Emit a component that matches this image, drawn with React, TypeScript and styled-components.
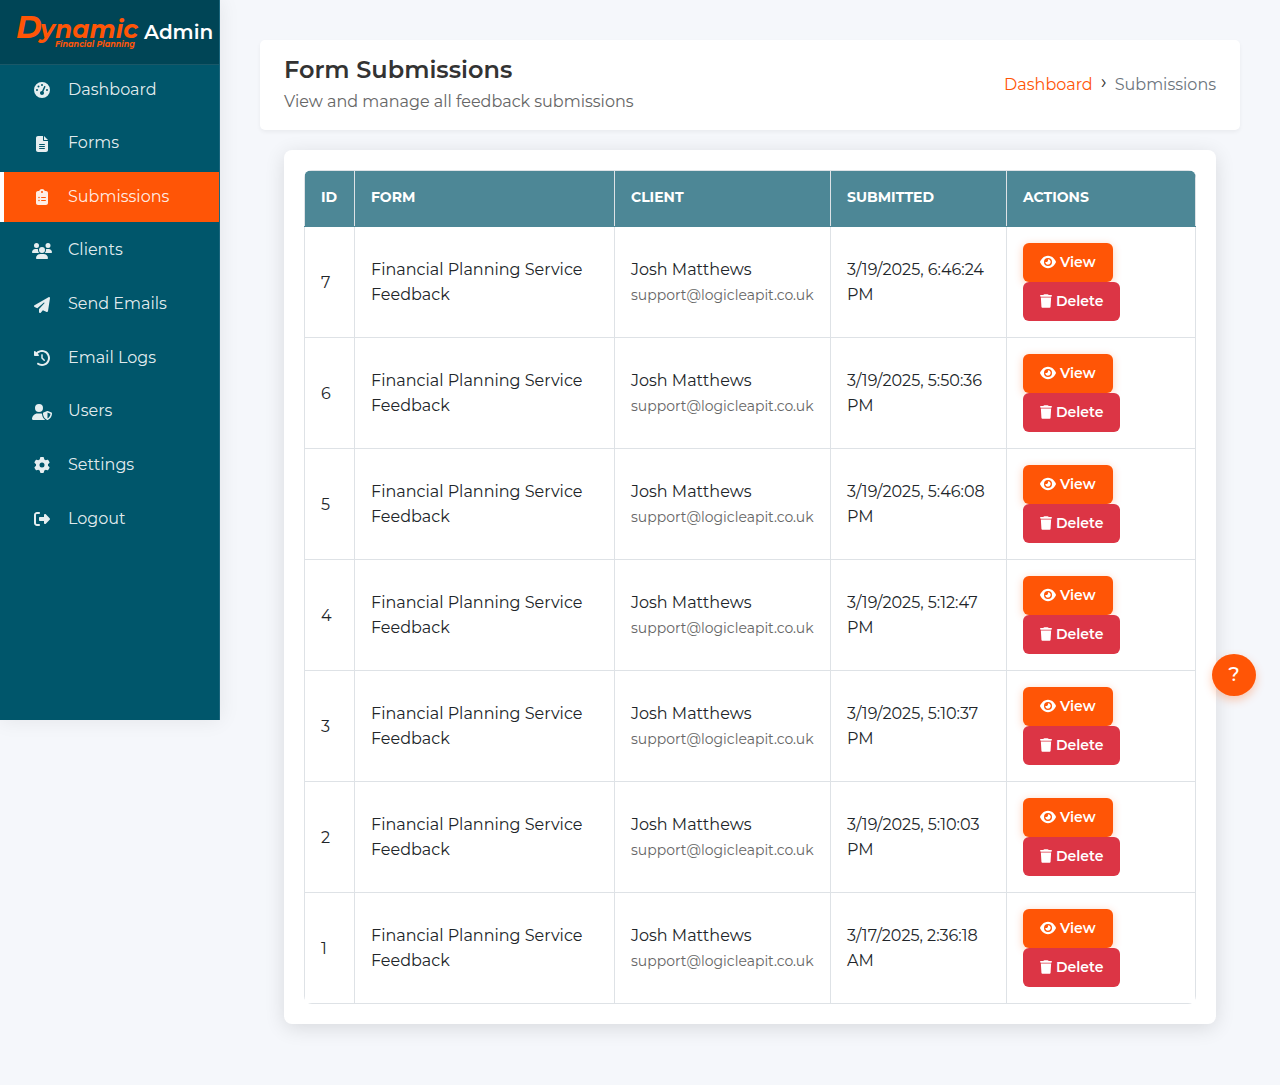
import React from 'react';
import styled, { createGlobalStyle } from 'styled-components';
import {
  FaGaugeHigh,
  FaFileLines,
  FaClipboardList,
  FaUsers,
  FaPaperPlane,
  FaClockRotateLeft,
  FaUserShield,
  FaGear,
  FaRightFromBracket,
  FaEye,
  FaTrash,
} from 'react-icons/fa6';

const GlobalStyle = createGlobalStyle`
  *, *::before, *::after { box-sizing: border-box; }
  body {
    margin: 0;
    background: #f5f7fb;
    color: #212529;
    font-family: Montserrat, Inter, "Open Sans", sans-serif;
    font-size: 16px;
    line-height: 25px;
  }
`;

const Layout = styled.div`
  display: flex;
  align-items: flex-start;
  position: relative;
`;

const Sidebar = styled.aside`
  flex: 0 0 220px;
  height: 720px;
  background: #00566b;
  border-right: 1px solid #1a667d;
  box-shadow: 0 0 20px rgba(0, 0, 0, 0.08);
`;

const Brand = styled.div`
  display: flex;
  align-items: center;
  gap: 8px;
  height: 65px;
  padding-left: 16px;
  background: #004556;
  border-bottom: 1px solid #1a5868;
  color: #fff;
  font-size: 20px;
  font-weight: 600;
`;

const Logo = styled.svg`
  flex: none;
  display: block;
  overflow: visible;
  fill: #ff5506;
  font-style: italic;
  font-weight: 700;
`;

const Nav = styled.nav`
  display: flex;
  flex-direction: column;
  justify-content: space-between;
  height: 479px;
`;

const NavLink = styled.a<{ $active?: boolean }>`
  display: flex;
  align-items: center;
  gap: 16px;
  height: 50px;
  padding-left: 28px;
  border-left: 4px solid ${(p) => (p.$active ? '#fff' : 'transparent')};
  background: ${(p) => (p.$active ? '#ff5506' : 'transparent')};
  color: rgba(255, 255, 255, 0.9);
  text-decoration: none;
`;

const NavIcon = styled.span`
  display: flex;
  justify-content: center;
  width: 20px;
`;

const NavLabel = styled.span`
  padding-bottom: 2px;
`;

const Main = styled.main`
  flex: 1;
  min-width: 0;
  padding: 40px 40px 60px;
`;

const PageHeader = styled.header`
  display: flex;
  justify-content: space-between;
  align-items: center;
  min-height: 90px;
  padding: 0 24px;
  background: #fff;
  border-radius: 5px;
  box-shadow: 0 2px 4px rgba(0, 0, 0, 0.05);
`;

const Title = styled.h1`
  margin: 0;
  color: #333;
  font-size: 24px;
  font-weight: 600;
  line-height: 34px;
`;

const Subtitle = styled.p`
  margin: 2px 0 4px;
  color: #666;
`;

const Breadcrumb = styled.nav`
  display: flex;
  gap: 8px;
  padding-bottom: 2px;
  color: #6c757d;
`;

const Crumb = styled.a`
  color: #ff5506;
  text-decoration: none;
`;

const Separator = styled.span`
  color: #333;
  font-size: 20px;
  line-height: 20px;
`;

const Card = styled.section`
  margin: 20px 24px 0;
  padding: 20px;
  background: #fff;
  border-radius: 8px;
  box-shadow: 0 4px 20px rgba(0, 0, 0, 0.12);
`;

const TableFrame = styled.div`
  border-radius: 8px;
  overflow: hidden;
`;

const Table = styled.table`
  width: 100%;
  border-collapse: collapse;
  table-layout: fixed;
`;

const Col = styled.col<{ $width?: string }>`
  width: ${(p) => p.$width ?? 'auto'};
`;

const HeadCell = styled.th`
  height: 56px;
  padding: 0 16px 2px;
  border: 1px solid #dee2e6;
  border-bottom-color: #4d8796;
  background: #4d8796;
  color: #fff;
  font-size: 14px;
  font-weight: 700;
  text-align: left;
  text-transform: uppercase;
`;

const Cell = styled.td`
  padding: 16px;
  border: 1px solid #dee2e6;
  vertical-align: middle;
`;

const Email = styled.div`
  color: #666;
  font-size: 14px;
  line-height: 26px;
`;

const Actions = styled.div`
  display: flex;
  flex-direction: column;
  align-items: flex-start;
`;

const ActionButton = styled.button<{ $danger?: boolean }>`
  display: flex;
  align-items: center;
  gap: 4px;
  height: 39px;
  padding: 0 17px 2px;
  border: 0;
  border-radius: 6px;
  background: ${(p) => (p.$danger ? '#dc3545' : '#ff5506')};
  box-shadow: ${(p) => (p.$danger ? 'none' : '0 2px 8px rgba(255, 85, 6, 0.3)')};
  color: #fff;
  font-family: inherit;
  font-size: 14px;
  font-weight: 600;
  cursor: pointer;
`;

const ViewIcon = styled(FaEye)`
  width: 16px;
  height: 16px;
`;

const DeleteIcon = styled(FaTrash)`
  width: 12px;
  height: 14px;
`;

const HelpButton = styled.button`
  position: absolute;
  top: 654px;
  right: 24px;
  width: 44px;
  height: 42px;
  padding: 0 0 2px;
  border: 0;
  border-radius: 50%;
  background: #ff5506;
  box-shadow: 0 4px 10px rgba(255, 85, 6, 0.3);
  color: #fff;
  font-family: inherit;
  font-size: 20px;
  font-weight: 500;
  cursor: pointer;
`;

const navItems = [
  { label: 'Dashboard', icon: <FaGaugeHigh /> },
  { label: 'Forms', icon: <FaFileLines /> },
  { label: 'Submissions', icon: <FaClipboardList />, active: true },
  { label: 'Clients', icon: <FaUsers size={20} /> },
  { label: 'Send Emails', icon: <FaPaperPlane /> },
  { label: 'Email Logs', icon: <FaClockRotateLeft /> },
  { label: 'Users', icon: <FaUserShield size={20} /> },
  { label: 'Settings', icon: <FaGear /> },
  { label: 'Logout', icon: <FaRightFromBracket /> },
];

const submissions = [
  { id: 7, submitted: '3/19/2025, 6:46:24 PM' },
  { id: 6, submitted: '3/19/2025, 5:50:36 PM' },
  { id: 5, submitted: '3/19/2025, 5:46:08 PM' },
  { id: 4, submitted: '3/19/2025, 5:12:47 PM' },
  { id: 3, submitted: '3/19/2025, 5:10:37 PM' },
  { id: 2, submitted: '3/19/2025, 5:10:03 PM' },
  { id: 1, submitted: '3/17/2025, 2:36:18 AM' },
];

function BrandLogo() {
  return (
    <Logo width="120" height="33" viewBox="0 0 120 33" role="img" aria-label="Dynamic Financial Planning">
      <text x="0" y="22" fontSize="31">D</text>
      <text x="24" y="22" fontSize="25">ynamic</text>
      <text x="39" y="31" fontSize="8">Financial Planning</text>
    </Logo>
  );
}

export default function App() {
  return (
    <>
      <GlobalStyle />
      <Layout>
        <Sidebar>
          <Brand>
            <BrandLogo />
            Admin
          </Brand>
          <Nav aria-label="Main">
            {navItems.map((item) => (
              <NavLink key={item.label} href="#" $active={item.active}>
                <NavIcon>{item.icon}</NavIcon>
                <NavLabel>{item.label}</NavLabel>
              </NavLink>
            ))}
          </Nav>
        </Sidebar>
        <Main>
          <PageHeader>
            <div>
              <Title>Form Submissions</Title>
              <Subtitle>View and manage all feedback submissions</Subtitle>
            </div>
            <Breadcrumb aria-label="Breadcrumb">
              <Crumb href="#">Dashboard</Crumb>
              <Separator>›</Separator>
              <span>Submissions</span>
            </Breadcrumb>
          </PageHeader>
          <Card>
            <TableFrame>
              <Table>
                <colgroup>
                  <Col $width="50px" />
                  <Col />
                  <Col $width="216px" />
                  <Col $width="176px" />
                  <Col $width="189px" />
                </colgroup>
                <thead>
                  <tr>
                    <HeadCell>ID</HeadCell>
                    <HeadCell>Form</HeadCell>
                    <HeadCell>Client</HeadCell>
                    <HeadCell>Submitted</HeadCell>
                    <HeadCell>Actions</HeadCell>
                  </tr>
                </thead>
                <tbody>
                  {submissions.map((row) => (
                    <tr key={row.id}>
                      <Cell>{row.id}</Cell>
                      <Cell>Financial Planning Service Feedback</Cell>
                      <Cell>
                        Josh Matthews
                        <Email>support@logicleapit.co.uk</Email>
                      </Cell>
                      <Cell>{row.submitted}</Cell>
                      <Cell>
                        <Actions>
                          <ActionButton type="button">
                            <ViewIcon />
                            View
                          </ActionButton>
                          <ActionButton type="button" $danger>
                            <DeleteIcon />
                            Delete
                          </ActionButton>
                        </Actions>
                      </Cell>
                    </tr>
                  ))}
                </tbody>
              </Table>
            </TableFrame>
          </Card>
        </Main>
        <HelpButton type="button" aria-label="Help">?</HelpButton>
      </Layout>
    </>
  );
}
